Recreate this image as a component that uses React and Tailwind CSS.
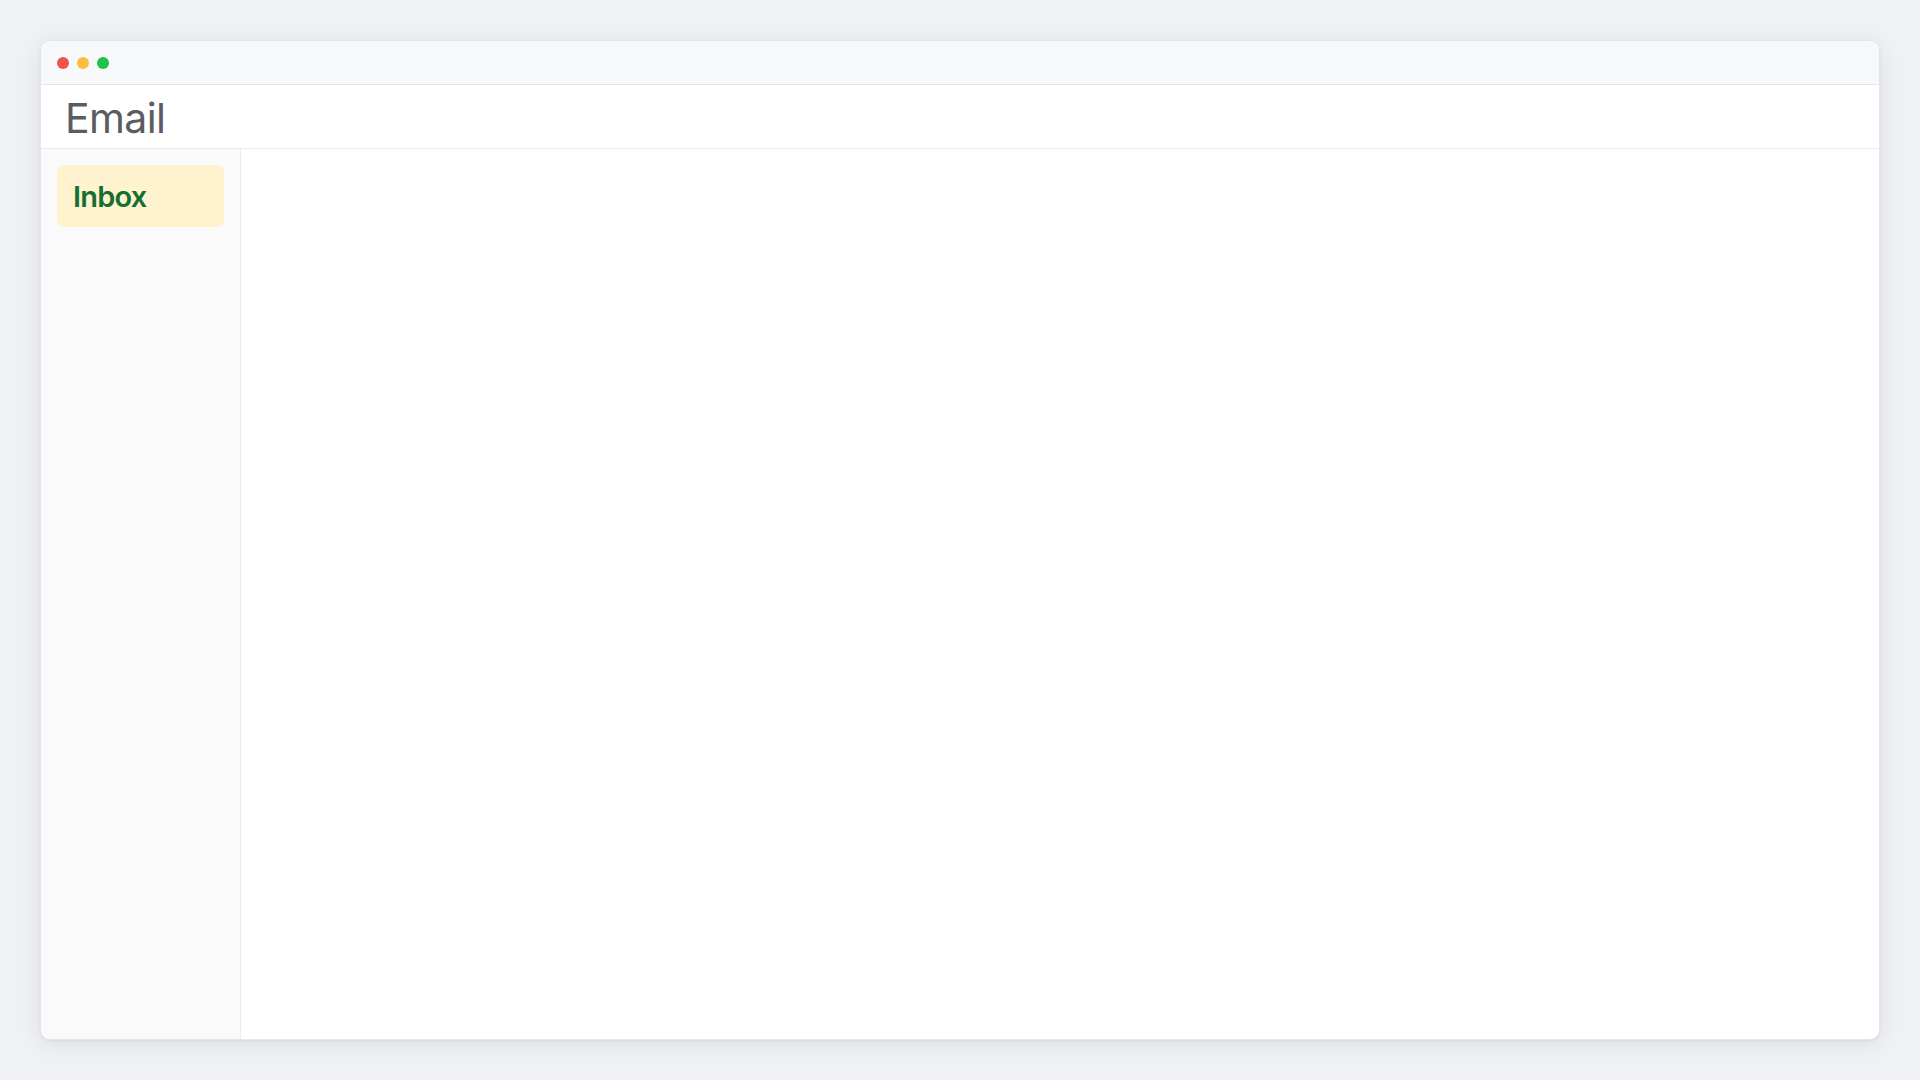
export default function App() {
  return (
    <div className="w-[1920px] h-[1080px] bg-[#eff1f5] p-10 font-['Inter',sans-serif]">
      <div className="w-full h-full bg-white rounded-[10px] overflow-hidden flex flex-col border border-[#e4e6ea] shadow-[0_4px_24px_rgba(0,0,0,0.08),0_1px_3px_rgba(0,0,0,0.06)]">
        <div className="h-[44px] shrink-0 bg-[#f7f8fa] border-b border-[#e3e5e9] flex items-center gap-2 px-4">
          <span className="w-3 h-3 rounded-full bg-[#f05252]"></span>
          <span className="w-3 h-3 rounded-full bg-[#fbbd3e]"></span>
          <span className="w-3 h-3 rounded-full bg-[#22c248]"></span>
        </div>
        <div className="h-[64px] shrink-0 border-b border-[#e8e9ec] flex items-center px-6">
          <h1 className="text-[41px] leading-none text-[#5b5c61] font-normal tracking-[-0.6px] pt-[3px]">Email</h1>
        </div>
        <div className="flex-1 flex min-h-0">
          <aside className="w-[200px] shrink-0 bg-[#fafafa] border-r border-[#ececee] p-4">
            <div className="h-[62px] rounded-lg bg-[#fef2cf] flex items-center px-4">
              <span className="text-[29px] font-semibold text-[#15702f] leading-none tracking-[-0.8px]">Inbox</span>
            </div>
          </aside>
          <main className="flex-1 bg-white"></main>
        </div>
      </div>
    </div>
  );
}
